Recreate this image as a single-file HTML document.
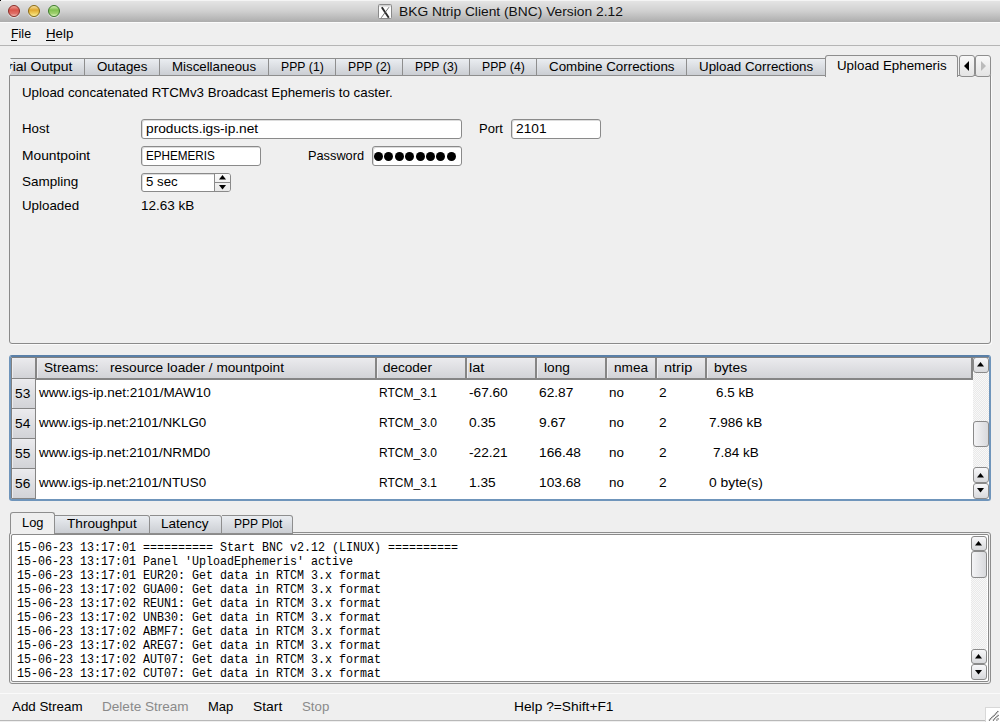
<!DOCTYPE html>
<html><head><meta charset="utf-8"><title>BNC</title>
<style>
html,body{margin:0;padding:0;}
body{width:1000px;height:722px;position:relative;overflow:hidden;background:#efefef;font-family:"Liberation Sans",sans-serif;}
.t{position:absolute;font-size:13px;line-height:16px;white-space:nowrap;color:#000;transform-origin:0 0;}
.m{position:absolute;font-family:"Liberation Mono",monospace;font-size:13px;line-height:16px;white-space:nowrap;color:#000;transform-origin:0 0;transform:scaleX(0.8974);}
.tt{position:absolute;font-size:13px;line-height:16px;white-space:nowrap;color:#111;}
#title{position:absolute;left:0;top:0;width:1000px;height:22px;background:linear-gradient(#e6e6e6 0,#d0d0d0 50%,#adadad 100%);}
#title::before{content:"";position:absolute;left:0;top:0;width:1000px;height:1px;background:#f4f4f4}
.tl{position:absolute;top:5px;width:10px;height:10px;border:1px solid;border-radius:50%;box-shadow:0 1px 1px rgba(255,255,255,.6);}
#xicon{position:absolute;left:378px;top:4px;width:14px;height:14px}
#menuline{position:absolute;left:0;top:22px;width:1000px;height:1px;background:#fbfbfb;}
#menuline::after{content:"";position:absolute;left:0;top:23px;width:1000px;height:1px;background:#b5b5b5;}
#panel{position:absolute;left:9px;top:75px;width:980px;height:267px;border:1px solid #8a8a8a;border-radius:0 0 3px 3px;box-shadow:1px 1px 0 #fafafa;}
.tab{position:absolute;top:58px;height:16px;border:1px solid #8e8e8e;border-left:none;background:linear-gradient(#eaedf1,#cbced3);}
#seltab{position:absolute;left:825px;top:55px;width:131px;height:21px;border:1px solid #8e8e8e;border-bottom:none;border-radius:3px 3px 0 0;background:#efefef;}
.sbtn{position:absolute;top:55px;width:14px;height:20px;border:1px solid #8e8e8e;border-radius:3px;background:linear-gradient(#f8f8f8,#e4e4e4);}
.inp{position:absolute;box-sizing:border-box;border:1px solid #8a8a8a;border-radius:3px;background:#fff;box-shadow:inset 1px 1px 0 #dcdcdc;}
.dot{position:absolute;width:9px;height:9px;border-radius:50%;background:#000;}
#spinbtn{position:absolute;left:214px;top:174px;width:15px;height:17px;border-radius:0 2px 2px 0;border-left:1px solid #8a8a8a;background:linear-gradient(#fafafa,#e8e8e8);}
#spinbtn::after{content:"";position:absolute;left:0;top:8px;width:15px;height:1px;background:#8a8a8a}
#table{position:absolute;left:9px;top:355px;width:978px;height:142px;border:2px solid #6f95bb;border-top-color:#5a80a8;border-radius:3px;background:#fff;box-shadow:inset 1px 1px 0 #808080;}
.hdr{position:absolute;top:358px;height:20px;border-right:2px solid #858585;border-bottom:2px solid #858585;box-shadow:inset 1px 1px 0 #ededf0;background:linear-gradient(#ebebee,#d2d3d7);}
.rh{position:absolute;left:12px;width:23px;height:29px;border-right:1px solid #858585;border-bottom:1px solid #858585;box-shadow:inset 1px 1px 0 #ededf0;background:linear-gradient(#ebebee,#d2d3d7);}
.track{position:absolute;background:repeating-conic-gradient(#e9e9e9 0 25%,#f8f8f8 0 50%) 0 0/2px 2px;}
.btn,.handle{position:absolute;box-sizing:border-box;border:1px solid #8a8a8a;border-radius:3px;background:linear-gradient(#f8f8fa,#d8d9dc);}
.handle{background:linear-gradient(90deg,#f4f4f6,#d8d9dc);}
.ltab{position:absolute;top:515px;height:17px;border:1px solid #8e8e8e;border-left:none;border-radius:0 3px 0 0;background:linear-gradient(#eaedf1,#cbced3);}
#logsel{position:absolute;left:10px;top:512px;width:43px;height:21px;border:1px solid #8e8e8e;border-bottom:none;border-radius:3px 3px 0 0;background:#efefef;}
#logo{position:absolute;left:9px;top:532px;width:980px;height:150px;border:1px solid #8e8e8e;border-radius:3px;background:#efefef;}
#log{position:absolute;left:11px;top:534px;width:976px;height:146px;border:1px solid #8a8a8a;border-radius:2px;background:#fff;}
#statline{position:absolute;left:0;top:693px;width:1000px;height:1px;background:#fafafa;}

#bottomline{position:absolute;left:0;top:720px;width:985px;height:1px;background:#b8b8b8;}

</style></head><body>
<div id="title"></div>
<div class="tl" style="left:8px;border-color:#8a2a24;background:linear-gradient(#f0a098 0,#d8544a 40%,#e07068 75%,#f0c0b8 100%);"></div>
<div class="tl" style="left:28px;border-color:#8a6a10;background:linear-gradient(#f8e0a0 0,#e0a830 40%,#f0d060 75%,#f8f0a0 100%);"></div>
<div class="tl" style="left:48px;border-color:#3a7a28;background:linear-gradient(#d0f0b0 0,#80c050 40%,#a0d070 75%,#e0f8c0 100%);"></div>
<div id="xicon"><svg width="15" height="16" viewBox="0 0 15 16"><rect x="0.5" y="0.5" width="13" height="14" rx="1" fill="#fdfdfd" stroke="#8a8a8a"/><rect x="1" y="1" width="12" height="1.5" fill="#d0d0d0"/><path d="M3.8 3.2 L10.8 13.8" stroke="#2a2a2a" stroke-width="1.9"/><path d="M11 3.2 L3.2 13.8" stroke="#666" stroke-width="0.9"/></svg></div>
<div style="position:absolute;left:0;top:0;width:1px;height:1px;background:#000"></div>
<div class="tt" style="left:399px;top:4px;transform:scaleX(1.061);transform-origin:0 0">BKG Ntrip Client (BNC) Version 2.12</div>
<div id="menuline"></div>
<div class="t" style="left:11px;top:26px;transform:scaleX(0.958)">File</div>
<div class="t" style="left:46px;top:26px;transform:scaleX(1.023)">Help</div>
<div style="position:absolute;left:11px;top:40px;width:6px;height:1px;background:#000"></div>
<div style="position:absolute;left:46px;top:40px;width:9px;height:1px;background:#000"></div>
<div id="panel"></div>
<div class="tab" style="left:10px;width:74px"></div>
<div class="t" style="left:8px;top:59px;transform:scaleX(1.075)">rial&nbsp;Output</div>
<div class="tab" style="left:85px;width:74px"></div>
<div class="t" style="left:97px;top:59px;transform:scaleX(1.025)">Outages</div>
<div class="tab" style="left:160px;width:108px"></div>
<div class="t" style="left:172px;top:59px;transform:scaleX(1.021)">Miscellaneous</div>
<div class="tab" style="left:269px;width:66px"></div>
<div class="t" style="left:281px;top:59px;transform:scaleX(0.939)">PPP&nbsp;(1)</div>
<div class="tab" style="left:336px;width:66px"></div>
<div class="t" style="left:348px;top:59px;transform:scaleX(0.939)">PPP&nbsp;(2)</div>
<div class="tab" style="left:403px;width:66px"></div>
<div class="t" style="left:415px;top:59px;transform:scaleX(0.939)">PPP&nbsp;(3)</div>
<div class="tab" style="left:470px;width:66px"></div>
<div class="t" style="left:482px;top:59px;transform:scaleX(0.939)">PPP&nbsp;(4)</div>
<div class="tab" style="left:537px;width:149px"></div>
<div class="t" style="left:549px;top:59px;transform:scaleX(1.028)">Combine&nbsp;Corrections</div>
<div class="tab" style="left:687px;width:138px"></div>
<div class="t" style="left:699px;top:59px;transform:scaleX(1.026)">Upload&nbsp;Corrections</div>
<div style="position:absolute;left:0;top:56px;width:10px;height:19px;background:#efefef"></div>
<svg style="position:absolute;left:0;top:56px" width="16" height="20"><path d="M0 0 L10 0 L10 2 L12 6 L10 6Z M0 19 L9 19 L12 13 L10 13Z" fill="#efefef"/><path d="M10 2.5 L12.5 7 M12.5 12 L9.5 18.5" stroke="#fbfbfb" fill="none" stroke-width="1"/></svg>
<div id="seltab"></div>
<div class="t" style="left:837px;top:58px;transform:scaleX(1.025)">Upload&nbsp;Ephemeris</div>
<div class="sbtn" style="left:959px"></div><div class="sbtn" style="left:975px"></div>
<div style="position:absolute;left:964px;top:61px;width:0;height:0;border-top:5px solid transparent;border-bottom:5px solid transparent;border-right:5px solid #000"></div>
<div style="position:absolute;left:981px;top:61px;width:0;height:0;border-top:5px solid transparent;border-bottom:5px solid transparent;border-left:5px solid #bbb"></div>
<div class="t" style="left:22px;top:85px;transform:scaleX(1.025)">Upload&nbsp;concatenated&nbsp;RTCMv3&nbsp;Broadcast&nbsp;Ephemeris&nbsp;to&nbsp;caster.</div>
<div class="t" style="left:22px;top:121px;transform:scaleX(1.022)">Host</div>
<div class="t" style="left:22px;top:148px;transform:scaleX(1.060)">Mountpoint</div>
<div class="t" style="left:22px;top:174px;transform:scaleX(1.036)">Sampling</div>
<div class="t" style="left:22px;top:198px;transform:scaleX(1.025)">Uploaded</div>
<div class="inp" style="left:141px;top:119px;width:321px;height:20px"></div>
<div class="t" style="left:146px;top:121px;transform:scaleX(1.056)">products.igs-ip.net</div>
<div class="t" style="left:479px;top:121px">Port</div>
<div class="inp" style="left:511px;top:119px;width:90px;height:20px"></div>
<div class="t" style="left:516px;top:121px;transform:scaleX(1.056)">2101</div>
<div class="inp" style="left:141px;top:146px;width:120px;height:20px"></div>
<div class="t" style="left:146px;top:148px;transform:scaleX(0.899)">EPHEMERIS</div>
<div class="t" style="left:308px;top:148px;transform:scaleX(0.982)">Password</div>
<div class="inp" style="left:372px;top:146px;width:90px;height:20px"></div>
<div class="dot" style="left:374.0px;top:152px"></div>
<div class="dot" style="left:384.4px;top:152px"></div>
<div class="dot" style="left:394.8px;top:152px"></div>
<div class="dot" style="left:405.2px;top:152px"></div>
<div class="dot" style="left:415.6px;top:152px"></div>
<div class="dot" style="left:426.0px;top:152px"></div>
<div class="dot" style="left:436.4px;top:152px"></div>
<div class="dot" style="left:446.8px;top:152px"></div>
<div class="inp" style="left:141px;top:173px;width:90px;height:19px"></div>
<div id="spinbtn"></div>
<svg style="position:absolute;left:219px;top:175px" width="8" height="5"><path d="M0 4.5 L3.5 0 L7 4.5Z" fill="#000"/></svg>
<svg style="position:absolute;left:219px;top:185px" width="8" height="5"><path d="M0 0 L3.5 4.5 L7 0Z" fill="#000"/></svg>
<div class="t" style="left:146px;top:174px;transform:scaleX(1.020)">5&nbsp;sec</div>
<div class="t" style="left:141px;top:198px;transform:scaleX(1.040)">12.63&nbsp;kB</div>
<div id="table"></div>
<div class="hdr" style="left:12px;width:23px"></div>
<div class="hdr" style="left:37px;width:338px"></div>
<div class="hdr" style="left:377px;width:88px"></div>
<div class="hdr" style="left:467px;width:68px"></div>
<div class="hdr" style="left:537px;width:68px"></div>
<div class="hdr" style="left:607px;width:48px"></div>
<div class="hdr" style="left:657px;width:48px"></div>
<div class="hdr" style="left:707px;width:264px"></div>
<div class="t" style="left:44px;top:360px;transform:scaleX(1.051)">Streams:&nbsp;&nbsp;&nbsp;resource&nbsp;loader&nbsp;/&nbsp;mountpoint</div>
<div class="t" style="left:383px;top:360px;transform:scaleX(1.041)">decoder</div>
<div class="t" style="left:469px;top:360px;transform:scaleX(1.121)">lat</div>
<div class="t" style="left:544px;top:360px;transform:scaleX(1.053)">long</div>
<div class="t" style="left:614px;top:360px;transform:scaleX(1.047)">nmea</div>
<div class="t" style="left:664px;top:360px;transform:scaleX(1.115)">ntrip</div>
<div class="t" style="left:714px;top:360px;transform:scaleX(1.064)">bytes</div>
<div class="rh" style="top:379px"></div>
<div class="t" style="left:15px;top:386px;transform:scaleX(1.056)">53</div>
<div class="t" style="left:39px;top:385px;transform:scaleX(1.037)">www.igs-ip.net:2101/MAW10</div>
<div class="t" style="left:379px;top:385px;transform:scaleX(0.925)">RTCM_3.1</div>
<div class="t" style="left:469px;top:385px;transform:scaleX(1.050)">-67.60</div>
<div class="t" style="left:539px;top:385px;transform:scaleX(1.056)">62.87</div>
<div class="t" style="left:609px;top:385px;transform:scaleX(1.033)">no</div>
<div class="t" style="left:659px;top:385px;transform:scaleX(1.056)">2</div>
<div class="t" style="left:716px;top:385px;transform:scaleX(1.033)">6.5&nbsp;kB</div>
<div class="rh" style="top:409px"></div>
<div class="t" style="left:15px;top:416px;transform:scaleX(1.056)">54</div>
<div class="t" style="left:39px;top:415px;transform:scaleX(1.029)">www.igs-ip.net:2101/NKLG0</div>
<div class="t" style="left:379px;top:415px;transform:scaleX(0.925)">RTCM_3.0</div>
<div class="t" style="left:469px;top:415px;transform:scaleX(1.056)">0.35</div>
<div class="t" style="left:539px;top:415px;transform:scaleX(1.056)">9.67</div>
<div class="t" style="left:609px;top:415px;transform:scaleX(1.033)">no</div>
<div class="t" style="left:659px;top:415px;transform:scaleX(1.056)">2</div>
<div class="t" style="left:709px;top:415px;transform:scaleX(1.040)">7.986&nbsp;kB</div>
<div class="rh" style="top:439px"></div>
<div class="t" style="left:15px;top:446px;transform:scaleX(1.056)">55</div>
<div class="t" style="left:39px;top:445px;transform:scaleX(1.031)">www.igs-ip.net:2101/NRMD0</div>
<div class="t" style="left:379px;top:445px;transform:scaleX(0.925)">RTCM_3.0</div>
<div class="t" style="left:469px;top:445px;transform:scaleX(1.050)">-22.21</div>
<div class="t" style="left:539px;top:445px;transform:scaleX(1.056)">166.48</div>
<div class="t" style="left:609px;top:445px;transform:scaleX(1.033)">no</div>
<div class="t" style="left:659px;top:445px;transform:scaleX(1.056)">2</div>
<div class="t" style="left:713px;top:445px;transform:scaleX(1.037)">7.84&nbsp;kB</div>
<div class="rh" style="top:469px"></div>
<div class="t" style="left:15px;top:476px;transform:scaleX(1.056)">56</div>
<div class="t" style="left:39px;top:475px;transform:scaleX(1.028)">www.igs-ip.net:2101/NTUS0</div>
<div class="t" style="left:379px;top:475px;transform:scaleX(0.925)">RTCM_3.1</div>
<div class="t" style="left:469px;top:475px;transform:scaleX(1.056)">1.35</div>
<div class="t" style="left:539px;top:475px;transform:scaleX(1.056)">103.68</div>
<div class="t" style="left:609px;top:475px;transform:scaleX(1.033)">no</div>
<div class="t" style="left:659px;top:475px;transform:scaleX(1.056)">2</div>
<div class="t" style="left:709px;top:475px;transform:scaleX(1.066)">0&nbsp;byte(s)</div>
<div class="track" style="left:973px;top:373px;width:16px;height:94px"></div>
<div class="btn" style="left:973px;top:357px;width:16px;height:16px"></div>
<div class="handle" style="left:973px;top:421px;width:16px;height:26px"></div>
<div class="btn" style="left:973px;top:467px;width:16px;height:16px"></div>
<div class="btn" style="left:973px;top:483px;width:16px;height:16px"></div>
<svg style="position:absolute;left:977px;top:362px" width="8" height="5"><path d="M0 4.5 L3.5 0 L7 4.5Z" fill="#000"/></svg>
<svg style="position:absolute;left:977px;top:473px" width="8" height="5"><path d="M0 4.5 L3.5 0 L7 4.5Z" fill="#000"/></svg>
<svg style="position:absolute;left:977px;top:488px" width="8" height="5"><path d="M0 0 L3.5 4.5 L7 0Z" fill="#000"/></svg>
<div id="logo"></div>
<div class="ltab" style="left:54px;width:95px"></div>
<div class="ltab" style="left:150px;width:71px"></div>
<div class="ltab" style="left:222px;width:70px"></div>
<div id="logsel"></div>
<div class="t" style="left:22px;top:515px;transform:scaleX(0.988)">Log</div>
<div class="t" style="left:67px;top:516px;transform:scaleX(1.048)">Throughput</div>
<div class="t" style="left:161px;top:516px;transform:scaleX(1.042)">Latency</div>
<div class="t" style="left:234px;top:516px;transform:scaleX(0.929)">PPP&nbsp;Plot</div>
<div id="log"></div>
<div class="m" style="left:17px;top:540px">15-06-23&nbsp;13:17:01&nbsp;==========&nbsp;Start&nbsp;BNC&nbsp;v2.12&nbsp;(LINUX)&nbsp;==========</div>
<div class="m" style="left:17px;top:554px">15-06-23&nbsp;13:17:01&nbsp;Panel&nbsp;'UploadEphemeris'&nbsp;active</div>
<div class="m" style="left:17px;top:568px">15-06-23&nbsp;13:17:01&nbsp;EUR20:&nbsp;Get&nbsp;data&nbsp;in&nbsp;RTCM&nbsp;3.x&nbsp;format</div>
<div class="m" style="left:17px;top:582px">15-06-23&nbsp;13:17:02&nbsp;GUA00:&nbsp;Get&nbsp;data&nbsp;in&nbsp;RTCM&nbsp;3.x&nbsp;format</div>
<div class="m" style="left:17px;top:596px">15-06-23&nbsp;13:17:02&nbsp;REUN1:&nbsp;Get&nbsp;data&nbsp;in&nbsp;RTCM&nbsp;3.x&nbsp;format</div>
<div class="m" style="left:17px;top:610px">15-06-23&nbsp;13:17:02&nbsp;UNB30:&nbsp;Get&nbsp;data&nbsp;in&nbsp;RTCM&nbsp;3.x&nbsp;format</div>
<div class="m" style="left:17px;top:624px">15-06-23&nbsp;13:17:02&nbsp;ABMF7:&nbsp;Get&nbsp;data&nbsp;in&nbsp;RTCM&nbsp;3.x&nbsp;format</div>
<div class="m" style="left:17px;top:638px">15-06-23&nbsp;13:17:02&nbsp;AREG7:&nbsp;Get&nbsp;data&nbsp;in&nbsp;RTCM&nbsp;3.x&nbsp;format</div>
<div class="m" style="left:17px;top:652px">15-06-23&nbsp;13:17:02&nbsp;AUT07:&nbsp;Get&nbsp;data&nbsp;in&nbsp;RTCM&nbsp;3.x&nbsp;format</div>
<div class="m" style="left:17px;top:666px">15-06-23&nbsp;13:17:02&nbsp;CUT07:&nbsp;Get&nbsp;data&nbsp;in&nbsp;RTCM&nbsp;3.x&nbsp;format</div>
<div class="track" style="left:971px;top:551px;width:16px;height:98px"></div>
<div class="btn" style="left:971px;top:536px;width:16px;height:15px"></div>
<div class="handle" style="left:971px;top:551px;width:16px;height:27px"></div>
<div class="btn" style="left:971px;top:649px;width:16px;height:15px"></div>
<div class="btn" style="left:971px;top:664px;width:16px;height:16px"></div>
<svg style="position:absolute;left:975px;top:541px" width="8" height="5"><path d="M0 4.5 L3.5 0 L7 4.5Z" fill="#000"/></svg>
<svg style="position:absolute;left:975px;top:654px" width="8" height="5"><path d="M0 4.5 L3.5 0 L7 4.5Z" fill="#000"/></svg>
<svg style="position:absolute;left:975px;top:670px" width="8" height="5"><path d="M0 0 L3.5 4.5 L7 0Z" fill="#000"/></svg>
<div id="statline"></div>
<div class="t" style="left:12px;top:699px;transform:scaleX(1.027)">Add&nbsp;Stream</div>
<div class="t" style="left:102px;top:699px;color:#8a8a8a;transform:scaleX(1.043)">Delete&nbsp;Stream</div>
<div class="t" style="left:208px;top:699px">Map</div>
<div class="t" style="left:253px;top:699px;transform:scaleX(1.068)">Start</div>
<div class="t" style="left:302px;top:699px;color:#8a8a8a;transform:scaleX(1.020)">Stop</div>
<div class="t" style="left:514px;top:699px;transform:scaleX(1.059)">Help&nbsp;?=Shift+F1</div>
<div id="bottomline"></div>
<div style="position:absolute;left:985px;top:707px;width:15px;height:15px;background:#fff;border-left:1px solid #d8d8d8;border-top:1px solid #d8d8d8"></div>
<svg style="position:absolute;left:986px;top:708px" width="14" height="14"><path d="M3 12.5 L12.5 3 M7 12.5 L12.5 7 M10.5 12.5 L12.5 10.5" stroke="#555" stroke-width="1.3" stroke-dasharray="1.2 0.5"/></svg>
</body></html>
